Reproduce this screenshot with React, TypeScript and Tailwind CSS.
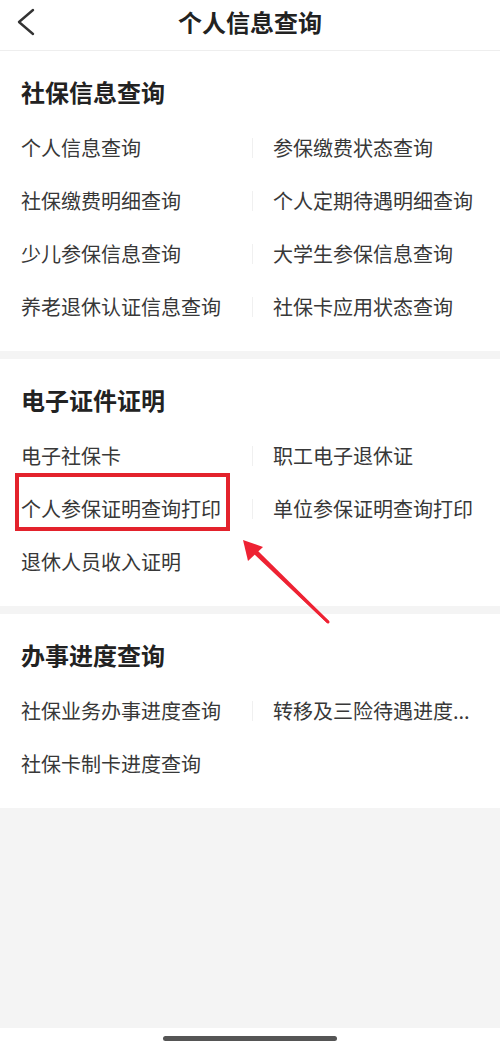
import React from 'react';

interface Section {
  title: string;
  items: string[];
}

const sections: Section[] = [
  {
    title: '社保信息查询',
    items: [
      '个人信息查询',
      '参保缴费状态查询',
      '社保缴费明细查询',
      '个人定期待遇明细查询',
      '少儿参保信息查询',
      '大学生参保信息查询',
      '养老退休认证信息查询',
      '社保卡应用状态查询',
    ],
  },
  {
    title: '电子证件证明',
    items: ['电子社保卡', '职工电子退休证', '个人参保证明查询打印', '单位参保证明查询打印', '退休人员收入证明'],
  },
  {
    title: '办事进度查询',
    // the long one is already cut in the app
    items: ['社保业务办事进度查询', '转移及三险待遇进度...', '社保卡制卡进度查询'],
  },
];

const font = { fontFamily: '"Noto Sans CJK SC", "Noto Sans", sans-serif' };

function SectionBlock({ section }: { section: Section }) {
  return (
    <div className="bg-white px-[21px] pt-[26px] pb-[18px]">
      <h2 className="h-[30px] text-[24px] leading-[30px] font-bold text-[#222]">{section.title}</h2>
      <div className="mt-[14px] grid grid-cols-[231px_1fr]">
        {section.items.map((item, i) => {
          const right = i % 2 === 1;
          const marked = item === '个人参保证明查询打印';
          return (
            <div key={item} className="relative flex h-[53px] items-center min-w-0">
              {right && <span className="h-[20px] w-px shrink-0 bg-[#f0f0f0]" />}
              <span className={`whitespace-nowrap text-[20px] text-[#383838] ${right ? 'pl-[20px]' : ''}`}>{item}</span>
              {marked && (
                <div className="absolute left-[-6px] top-[-9px] h-[58px] w-[215px] border-[4px] border-[#e3222c]" />
              )}
            </div>
          );
        })}
      </div>
    </div>
  );
}

export default function App() {
  return (
    <div className="relative flex h-[1049px] w-[500px] flex-col bg-[#f4f4f4]" style={font}>
      {/* Header */}
      <div className="relative flex h-[51px] shrink-0 items-start justify-center border-b border-[#eeeeee] bg-white pt-[8px]">
        <svg className="absolute left-[14px] top-[6px]" width="26" height="32" viewBox="0 0 26 32" fill="none">
          <path d="M19 4 L5 16 L19 28" stroke="#333" strokeWidth="2.4" strokeLinecap="round" strokeLinejoin="round" />
        </svg>
        <h1 className="text-[24px] leading-[28px] font-semibold text-[#222]">个人信息查询</h1>
      </div>

      <div className="flex flex-col gap-[8px]">
        {sections.map((s) => (
          <SectionBlock key={s.title} section={s} />
        ))}
      </div>

      <div className="flex-1" />

      {/* Home indicator */}
      <div className="flex h-[21px] shrink-0 items-start justify-center bg-white pt-[8px]">
        <div className="h-[5px] w-[174px] rounded-full bg-[#555]" />
      </div>

      {/* Annotation arrow */}
      <svg className="pointer-events-none absolute left-0 top-0" width="500" height="1049" viewBox="0 0 500 1049">
        <path d="M327 623 L253 552 L256 549 L329 621 Z" fill="#ee2233" />
        <path d="M243 540 L263 547 L248 561 Z" fill="#ee2233" />
        <line x1="328" y1="622" x2="252" y2="550" stroke="#ee2233" strokeWidth="3" strokeLinecap="round" />
      </svg>
    </div>
  );
}
